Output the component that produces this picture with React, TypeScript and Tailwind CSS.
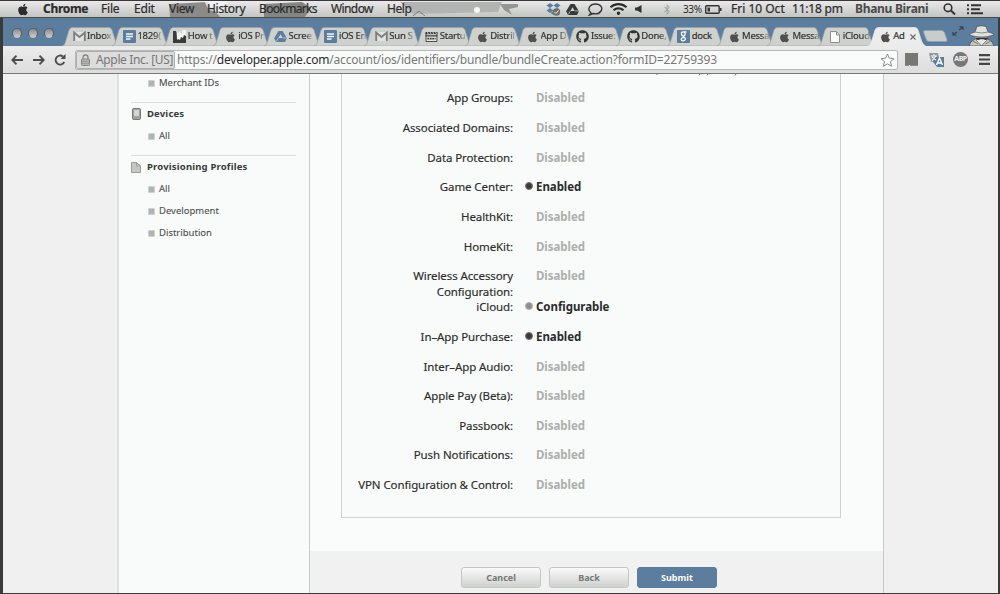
import type { ReactNode } from "react";
import { FaApple, FaGithub, FaWifi, FaBluetoothB } from "react-icons/fa";

type IconKind = "gmail" | "doc" | "bird" | "apple" | "drive" | "clap" | "github" | "google" | "page";

function Gmail() {
  return (
    <svg viewBox="0 0 13 11" className="h-[11px] w-[13px]">
      <path d="M1 1h11v9H1z" fill="#e2e3e2" />
      <path d="M1.2 10V1.6L6.5 6l5.300-4.400V10" fill="none" stroke="#7e7f7d" strokeWidth="1.900" />
    </svg>
  );
}

function Doc() {
  return (
    <svg viewBox="0 0 13 13" className="h-[13px] w-[13px]">
      <rect width="13" height="13" rx="1" fill="#5c7d9e" />
      <path d="M3 4h7M3 6.500h7M3 9h4.500" stroke="#f4f6f7" strokeWidth="1.300" />
    </svg>
  );
}

function Bird() {
  return (
    <svg viewBox="0 0 13 13" className="h-[13px] w-[13px]">
      <path d="M0 1h3l2 3 1-2 2 1 2-2h3v12H0z" fill="#3a3a3a" />
      <path d="M3.500 0l1.500 3 1.500-2L8 3l1.500-3H13v6l-2-1-1 3-2-1-1 3-2-1-1 1z" fill="#f2f2f2" />
    </svg>
  );
}

function Drive({ dark = false }: { dark?: boolean }) {
  return (
    <svg viewBox="0 0 14 12" className="h-[11px] w-[13px]">
      <path d="M4.800 0h4.400L14 8l-2.100 4H2.200L0 8z" fill={dark ? "#383838" : "#5c7d9e"} />
      <path d="M7 3.500L9.300 7.500H4.800z" fill="#d5d7d5" />
      <path d="M4.700 7.500L2.400 11.500M9.300 7.500H14" stroke="#d5d7d5" strokeWidth=".8" />
    </svg>
  );
}

function Clap() {
  return (
    <svg viewBox="0 0 13 11" className="h-[10px] w-[13px]">
      <path d="M.5.5h12v10H.5z" fill="#e4e5e4" stroke="#3b3b3b" />
      <path d="M0 0h13v2.500H0zM0 3.700h13V5H0z" fill="#3b3b3b" />
      <path d="M2 7.300h9" stroke="#3b3b3b" strokeWidth="1.800" strokeDasharray="2 .7" />
      <path d="M2 0l1 2.500M5 0l1 2.500M8 0l1 2.500M11 0l1 2.500" stroke="#eee" strokeWidth=".8" />
    </svg>
  );
}

function Google() {
  return (
    <svg viewBox="0 0 13 13" className="h-[13px] w-[13px]">
      <rect width="13" height="13" rx="1" fill="#5c7d9e" />
      <path d="M9.500 1.800H6.200a2 2 0 1 0 .5 4c-.8 1 .6 1.300 1.200 2 1.200 1.500-.2 3.200-2 3-2.500-.2-2.500-3 .8-3.100M7 2.100c1.600.8 1.500 3.300-.3 3.700" fill="none" stroke="#fff" strokeWidth="1.300" />
    </svg>
  );
}

function PageIcon() {
  return (
    <svg viewBox="0 0 10 12" className="h-[12px] w-[10px]">
      <path d="M.5.5h6L9.500 4v7.500h-9z" fill="#fbfcfb" stroke="#8d8e8c" />
      <path d="M6.500.5V4h3" fill="none" stroke="#8d8e8c" />
    </svg>
  );
}

function TabIcon({ kind }: { kind: IconKind }) {
  switch (kind) {
    case "gmail": return <Gmail />;
    case "doc": return <Doc />;
    case "bird": return <Bird />;
    case "drive": return <Drive />;
    case "clap": return <Clap />;
    case "google": return <Google />;
    case "page": return <PageIcon />;
    case "github": return <FaGithub className="h-[13px] w-[13px] text-[#333433]" />;
    default: return <FaApple className="h-[12px] w-[11px] text-[#4f504e]" />;
  }
}

const tabs: { icon: IconKind; title: string }[] = [
  { icon: "gmail", title: "Inbox" },
  { icon: "doc", title: "1829(" },
  { icon: "bird", title: "How t" },
  { icon: "apple", title: "iOS Pr" },
  { icon: "drive", title: "Scree" },
  { icon: "doc", title: "iOS En" },
  { icon: "gmail", title: "Sun S" },
  { icon: "clap", title: "Startu" },
  { icon: "apple", title: "Distril" },
  { icon: "apple", title: "App D" },
  { icon: "github", title: "Issue:" },
  { icon: "github", title: "Done," },
  { icon: "google", title: "dock" },
  { icon: "apple", title: "Messa" },
  { icon: "apple", title: "Messa" },
  { icon: "page", title: "iCloud" },
  { icon: "apple", title: "Ad" },
];

function Tab({ icon, title, active }: { icon: IconKind; title: string; active: boolean }) {
  const faded = !active && title !== "dock";
  return (
    <div className="relative flex h-[19px] w-[50.4px] shrink-0 items-center pl-[10px]">
      <svg viewBox="0 0 58 19" className="absolute top-0 left-0 h-[19px] w-[58px]">
        <path
          d="M0 19C3 18 3 16 4 13L7 3Q8 .5 10 .5H47Q49 .5 50 3L53.500 14Q55 18 57.500 19Z"
          fill={active ? "#ececec" : "#cfd1cf"}
          stroke={active ? "#ececec" : "#9aa0a3"}
          strokeWidth=".7"
        />
      </svg>
      <span className="relative flex w-[14px] shrink-0 justify-center"><TabIcon kind={icon} /></span>
      <span className={`relative mb-[2px] ml-[1px] w-max shrink-0 text-[9.5px] leading-[16px] tracking-[-0.25px] whitespace-nowrap [-webkit-text-stroke:0.2px] ${faded ? "[mask-image:linear-gradient(to_right,black_70%,#0004)]" : ""}`}>
        {title}
      </span>
      {active && (
        <svg viewBox="0 0 6 6" className="relative ml-[5px] h-[6px] w-[6px] shrink-0">
          <path d="M.5.5l5 5M5.500.5l-5 5" stroke="#6d6e6c" strokeWidth="1.200" />
        </svg>
      )}
    </div>
  );
}

const menus = [
  { label: "Chrome", cls: "w-[58px] font-bold tracking-[-0.3px]" },
  { label: "File", cls: "w-[33px] tracking-[-0.2px]" },
  { label: "Edit", cls: "w-[35px] tracking-[-0.2px]" },
  { label: "View", cls: "w-[38px] tracking-[-0.3px]" },
  { label: "History", cls: "w-[52px] tracking-[-0.3px]" },
  { label: "Bookmarks", cls: "w-[72px] tracking-[-0.65px]" },
  { label: "Window", cls: "w-[56px] tracking-[-0.6px]" },
  { label: "Help", cls: "w-[30px] tracking-[-0.45px]" },
];

function MenuBar() {
  return (
    <div className="relative flex h-[18px] shrink-0 items-center overflow-hidden border-t border-b border-t-[#3a363a] border-b-[#4b4b4b] bg-linear-to-b from-[#e9e9e9] to-[#c3c5c3] pl-[17px] text-[12px] leading-[16px] text-[#2b2b2b]">
      <svg viewBox="0 0 1000 16" className="absolute top-0 left-0 h-[16px] w-[1000px]">
        <path d="M169 3l38-2 13 15h-50z" fill="#8b8c8a" />
        <path d="M204 0h24l-5 12-14-3z" fill="#f4f4f4" opacity=".8" />
        <path d="M264 3l38-2 9 6-6 9h-41z" fill="#858684" />
        <path d="M400 1h102l-4 10-85 2z" fill="#b1b4b2" />
        <path d="M500 3h18v3l-9 2 3 6-8-5z" fill="#949694" />
        <circle cx="477" cy="9" r="3" fill="#f5f6f5" />
        <path d="M413 15l6-5 6 5" fill="none" stroke="#7e807e" />
      </svg>
      <FaApple className="relative h-[13px] w-[12px]" />
      <div className="relative ml-[14px] flex [-webkit-text-stroke:0.2px]">
        {menus.map((m) => <span key={m.label} className={`shrink-0 whitespace-nowrap ${m.cls}`}>{m.label}</span>)}
      </div>
      <div className="relative ml-[129px] flex items-center">
        <svg viewBox="0 0 15 13" className="h-[13px] w-[15px]">
          <path d="M4 0l3.500 2.500L4 5 .5 2.500zM11 0l3.500 2.500L11 5 7.500 2.500zM4 5l3.500 2.500L4 10 .5 7.500zM11 5l3.500 2.500L11 10 7.500 7.500zM7.500 8l3 2-3 2-3-2z" fill="#5c7d9e" />
          <circle cx="10.500" cy="9" r="3.700" fill="#70716f" />
          <path d="M8.500 9l1.500 1.500L12.500 7.500" fill="none" stroke="#e8e8e8" />
        </svg>
        <span className="ml-[5px]"><Drive dark /></span>
        <svg viewBox="0 0 15 13" className="ml-[9px] h-[13px] w-[15px]">
          <path d="M3 10C-1.500 6 2 1 7.500 1S15 5 13 8s-5.500 3.200-8 2.500L1.500 12z" fill="none" stroke="#373737" strokeWidth="1.400" />
        </svg>
        <FaWifi className="ml-[7px] h-[14px] w-[17px]" />
        <svg viewBox="0 0 7 8" className="ml-[8px] h-[8px] w-[7px]"><path d="M0 2.500h2L6.500 0v8L2 5.500H0z" fill="#333" /></svg>
        <FaBluetoothB className="ml-[21px] h-[11px] w-[8px] text-[#a2a3a1]" />
        <span className="ml-[12px] w-[22px] text-[10px] tracking-[-0.4px]">33%</span>
        <svg viewBox="0 0 17 9" className="h-[9px] w-[17px]">
          <rect x=".7" y=".7" width="13.500" height="7.600" rx="1" fill="none" stroke="#333" strokeWidth="1.400" />
          <path d="M2.500 2.500H5v4H2.500zM15 3h1.500v3H15z" fill="#333" />
        </svg>
        <span className="ml-[9px] w-[61px] whitespace-nowrap [-webkit-text-stroke:0.2px]">Fri 10 Oct</span>
        <span className="w-[63px] tracking-[-0.2px] whitespace-nowrap [-webkit-text-stroke:0.2px]">11:18 pm</span>
        <span className="w-[88px] font-bold tracking-[-0.3px] whitespace-nowrap text-[#4a4b4a]">Bhanu Birani</span>
        <svg viewBox="0 0 13 12" className="h-[12px] w-[13px]">
          <circle cx="5" cy="4.800" r="3.800" fill="none" stroke="#333" strokeWidth="1.600" />
          <path d="M8 7.500l4 4" stroke="#333" strokeWidth="2" />
        </svg>
        <svg viewBox="0 0 17 11" className="ml-[11px] h-[11px] w-[17px]">
          <path d="M0 1.200h2M4 1.200h10M0 5.200h2M4 5.200h9M0 9.300h2M4 9.300h12" stroke="#333" strokeWidth="1.900" />
        </svg>
      </div>
    </div>
  );
}

function TabStrip() {
  return (
    <div className="flex h-[28px] shrink-0 items-end bg-[#5c7d9e] text-[#333433]">
      <div className="flex h-full items-center gap-[6px] pt-[1px] pl-[9px]">
        {["close", "minimise", "zoom"].map((b) => (
          <span key={b} className="h-[10px] w-[10px] rounded-full border border-[#555b60] border-b-[#c9cccc] bg-linear-to-b from-[#8b8e8f] to-[#c8caca]" />
        ))}
      </div>
      <div className="ml-[8px] flex">
        {tabs.map((t, i) => <Tab key={i} {...t} active={i === tabs.length - 1} />)}
      </div>
      <svg viewBox="0 0 25 12" className="mb-[4px] ml-[4px] h-[12px] w-[25px] shrink-0">
        <path d="M2 .5h16.500q2 0 3 2l2.500 7q.5 2-1.500 2H6q-2 0-2.700-2L.8 3Q0 .5 2 .5z" fill="#c9cccc" stroke="#91a1ad" />
      </svg>
      <svg viewBox="0 0 12 10" className="mb-[10px] ml-[4px] h-[10px] w-[12px] shrink-0">
        <path d="M7 4l4-3M7.500.8H11V4M5 6L1 9M1 6v3h3.500" fill="none" stroke="#39444e" strokeWidth="1.200" />
      </svg>
      <svg viewBox="0 0 27 21" className="ml-[4px] h-[21px] w-[27px] shrink-0">
        <path d="M1 21q1-5 6-7h13q5 2 6 7z" fill="#c3c5c3" stroke="#4a4b4a" strokeWidth=".8" />
        <path d="M7.500 9h12v6l-6 5-6-5z" fill="#e6e8e6" />
        <path d="M7 7L9 1.500Q13.500 0 18 1.500L20 7q5 1 6 3-6 2-12.500 2T1 10Q3 8 7 7z" fill="#e0e2e0" stroke="#4f504e" strokeWidth=".7" />
        <path d="M7 7q7 2 13 0" fill="none" stroke="#8b8c8a" />
        <path d="M7.500 12.500H20v1.800q-2.500 1.200-4.500 0h-3q-2.500 1.200-5 0z" fill="#353635" />
        <path d="M8 15l5.500 6M19 15l-5.500 6M10 19l-5-3M17.500 19l5-3" fill="none" stroke="#6d6e6c" strokeWidth=".8" />
      </svg>
    </div>
  );
}

function Toolbar() {
  return (
    <div className="flex h-[28px] shrink-0 items-center border-b border-[#777877] bg-linear-to-b from-[#ececec] to-[#dcdddc] pl-[8px]">
      <svg viewBox="0 0 12 10" className="h-[10px] w-[12px]"><path d="M5.500.7L1.300 5l4.200 4.300M1.300 5H12" fill="none" stroke="#4c4d4b" strokeWidth="1.900" /></svg>
      <svg viewBox="0 0 12 10" className="ml-[10px] h-[10px] w-[12px]"><path d="M6.500.7L10.700 5 6.500 9.300M10.700 5H0" fill="none" stroke="#4c4d4b" strokeWidth="1.900" /></svg>
      <svg viewBox="0 0 12 12" className="ml-[9px] h-[12px] w-[12px]">
        <path d="M10.200 8A4.500 4.500 0 1 1 9 2.600" fill="none" stroke="#4c4d4b" strokeWidth="1.900" />
        <path d="M11.500 0v5H6.500z" fill="#4c4d4b" />
      </svg>
      <div className="ml-[9px] flex h-[20px] w-[823px] items-center rounded-[2px] border border-[#b5b7b5] bg-[#fafcfb] text-[12px] text-[#777876]">
        <div className="flex h-[18px] w-[99px] shrink-0 items-center rounded-[2px] border border-[#adafad] bg-[#dcdddc] pl-[4px]">
          <svg viewBox="0 0 9 12" className="h-[12px] w-[9px] shrink-0">
            <path d="M2 5V3.500a2.500 2.500 0 0 1 5 0V5" fill="none" stroke="#858684" strokeWidth="1.300" />
            <rect x=".5" y="5" width="8" height="6.500" rx="1" fill="#b5b7b5" stroke="#858684" />
            <path d="M1 7.500h7M1 9.500h7" stroke="#8f908e" strokeWidth=".7" />
          </svg>
          <span className="ml-[6px] tracking-[-0.35px] whitespace-nowrap">Apple Inc. [US]</span>
        </div>
        <div className="ml-[2px] grow tracking-[-0.2px] whitespace-nowrap">
          https://<span className="text-[#2b2b2b]">developer.apple.com</span>/account/ios/identifiers/bundle/bundleCreate.action?formID=22759393
        </div>
        <svg viewBox="0 0 15 14" className="mr-[2px] h-[14px] w-[15px] shrink-0">
          <path d="M7.500 1l1.800 4.200 4.700.5-3.500 3 1.100 4.600-4.100-2.500-4.100 2.500 1.100-4.600-3.500-3 4.700-.5z" fill="#fff" stroke="#858684" />
        </svg>
      </div>
      <svg viewBox="0 0 14 15" className="ml-[7px] h-[15px] w-[14px]">
        <path d="M0 1h13v12H0z" fill="#777773" /><path d="M0 13.500h4M5 13.500h8" stroke="#8d8e8c" />
      </svg>
      <svg viewBox="0 0 16 16" className="ml-[10px] h-[16px] w-[16px]">
        <path d="M0 1h9l2 9H2z" fill="#8e9b9f" /><path d="M6 5h9v10H8L4 10z" fill="#5c7d9e" />
        <path d="M2 4h6M5 2v2M3 9l4-5M3 5l4 3" stroke="#f2f2f2" strokeWidth="1.100" />
        <path d="M7.500 13l3-7 3 7M8.500 11h4" fill="none" stroke="#fff" strokeWidth="1.400" />
      </svg>
      <span className="ml-[8px] flex h-[15px] w-[15px] shrink-0 items-center justify-center rounded-full bg-[#777876] text-[7px] font-bold tracking-[-0.5px] text-[#f0f0f0]">ABP</span>
      <svg viewBox="0 0 11 11" className="ml-[11px] h-[11px] w-[11px]"><path d="M0 1.200h11M0 5.500h11M0 9.800h11" stroke="#454644" strokeWidth="2.200" /></svg>
    </div>
  );
}

function SideItem({ children }: { children: ReactNode }) {
  return (
    <li className="flex h-[22px] items-center pl-[29px] text-[9.5px] text-[#4d4e4c] [-webkit-text-stroke:0.1px]">
      <span className="mr-[4px] h-[7px] w-[7px] rounded-[1px] border border-[#cfd1cf] bg-[#b2b4b2]" />
      {children}
    </li>
  );
}

function SideHeading({ icon, children }: { icon: ReactNode; children: ReactNode }) {
  return (
    <h2 className="flex h-[22px] items-center pl-[12px] text-[9.5px] font-bold tracking-[0.17px] text-[#383938]">
      <span className="flex w-[16px] shrink-0">{icon}</span>
      {children}
    </h2>
  );
}

function Sidebar() {
  return (
    <nav className="flex w-[191px] shrink-0 flex-col border-r border-[#c9cbc9] bg-[#f9fbfa]">
      <ul className="-mt-[2px]"><SideItem>Merchant IDs</SideItem></ul>
      <div className="mt-[8px] mr-[13px] ml-[12px] h-px bg-[#dcdedc]" />
      <SideHeading
        icon={
          <svg viewBox="0 0 9 12" className="ml-px h-[12px] w-[9px]">
            <rect x=".5" y=".5" width="8" height="11" rx="1" fill="#a0a29f" stroke="#777876" />
            <path d="M2 2h5v6H2z" fill="#d3d5d3" />
          </svg>
        }
      >
        Devices
      </SideHeading>
      <ul><SideItem>All</SideItem></ul>
      <div className="mt-[8px] mr-[13px] ml-[12px] h-px bg-[#dcdedc]" />
      <SideHeading
        icon={
          <svg viewBox="0 0 10 11" className="h-[11px] w-[10px]">
            <path d="M.5.5h5L9.500 4v6.500h-9z" fill="#c5c7c5" stroke="#9b9d9b" /><path d="M5.500.5V4h4" fill="none" stroke="#9b9d9b" />
          </svg>
        }
      >
        Provisioning Profiles
      </SideHeading>
      <ul>
        <SideItem>All</SideItem>
        <SideItem>Development</SideItem>
        <SideItem>Distribution</SideItem>
      </ul>
    </nav>
  );
}

type Status = "Disabled" | "Enabled" | "Configurable";
const services: { name: string; status: Status; wrap?: boolean }[] = [
  { name: "App Groups:", status: "Disabled" },
  { name: "Associated Domains:", status: "Disabled" },
  { name: "Data Protection:", status: "Disabled" },
  { name: "Game Center:", status: "Enabled" },
  { name: "HealthKit:", status: "Disabled" },
  { name: "HomeKit:", status: "Disabled" },
  { name: "Wireless Accessory Configuration:", status: "Disabled", wrap: true },
  { name: "iCloud:", status: "Configurable" },
  { name: "In–App Purchase:", status: "Enabled" },
  { name: "Inter–App Audio:", status: "Disabled" },
  { name: "Apple Pay (Beta):", status: "Disabled" },
  { name: "Passbook:", status: "Disabled" },
  { name: "Push Notifications:", status: "Disabled" },
  { name: "VPN Configuration & Control:", status: "Disabled" },
];

const dots: Record<Status, string> = {
  Disabled: "bg-transparent",
  Enabled: "bg-[#3b3b3b] border border-[#777876]",
  Configurable: "bg-[#8d8f8d] border border-[#b2b4b2]",
};

function ServiceRow({ name, status, wrap }: { name: string; status: Status; wrap?: boolean }) {
  return (
    <div className={`flex shrink-0 items-start text-[11.5px] leading-[16px] ${wrap ? "h-[31.2px]" : "h-[29.64px]"}`}>
      <span className={`text-right tracking-[-0.1px] text-[#2b2b2b] [-webkit-text-stroke:0.15px] ${wrap ? "ml-[51px] w-[120px]" : "w-[171px] whitespace-nowrap"}`}>{name}</span>
      <span className={`mt-[3px] ml-[12px] h-[8px] w-[8px] rounded-full ${dots[status]}`} />
      <span className={`ml-[3px] font-bold tracking-[-0.05px] ${status === "Disabled" ? "text-[#adafad]" : "text-[#2b2b2b]"}`}>{status}</span>
    </div>
  );
}

const buttonBase = "flex h-[21px] w-[80px] items-center justify-center rounded-[3px] border text-[9px] font-bold";

export default function App() {
  return (
    <div className="flex h-[594px] w-[1000px] flex-col overflow-hidden bg-[#3a3a3a] font-['Noto_Sans','Open_Sans',sans-serif]">
      <MenuBar />
      <div className="mr-[2px] mb-px ml-[3px] flex min-h-0 grow flex-col">
        <TabStrip />
        <Toolbar />
        <div className="flex min-h-0 grow bg-[#f0f0f0] pl-[114px]">
          <div className="flex w-[767px] border-r border-l-2 border-r-[#c9cbc9] border-l-[#dfe1e0]">
            <Sidebar />
            <main className="flex grow flex-col bg-[#fafcfb]">
              <section className="relative ml-[31px] flex h-[444px] w-[500px] shrink-0 flex-col overflow-hidden border border-t-0 border-[#cfd1cf] bg-[#f9fbfa] pt-[16.4px]">
                <svg viewBox="0 0 100 2" className="absolute top-0 left-[310px] h-[2px] w-[100px]">
                  <path d="M5 0v1M48 0l-1 1.500M56 0l-1 1.500M84 0l-1 1.500" stroke="#777876" />
                </svg>
                {services.map((s) => <ServiceRow key={s.name} {...s} />)}
              </section>
              <footer className="mt-[33px] flex grow items-start gap-[8px] bg-[#f0f1f0] pt-[16px] pl-[151px]">
                <button className={`${buttonBase} border-[#c5c7c5] bg-linear-to-b from-[#fafafa] to-[#cfd1cf] text-[#777876]`}>Cancel</button>
                <button className={`${buttonBase} border-[#c5c7c5] bg-linear-to-b from-[#fafafa] to-[#cfd1cf] text-[#777876]`}>Back</button>
                <button className={`${buttonBase} border-[#5c7d9e] bg-[#5c7d9e] text-[#fafcfb]`}>Submit</button>
              </footer>
            </main>
          </div>
        </div>
      </div>
    </div>
  );
}
